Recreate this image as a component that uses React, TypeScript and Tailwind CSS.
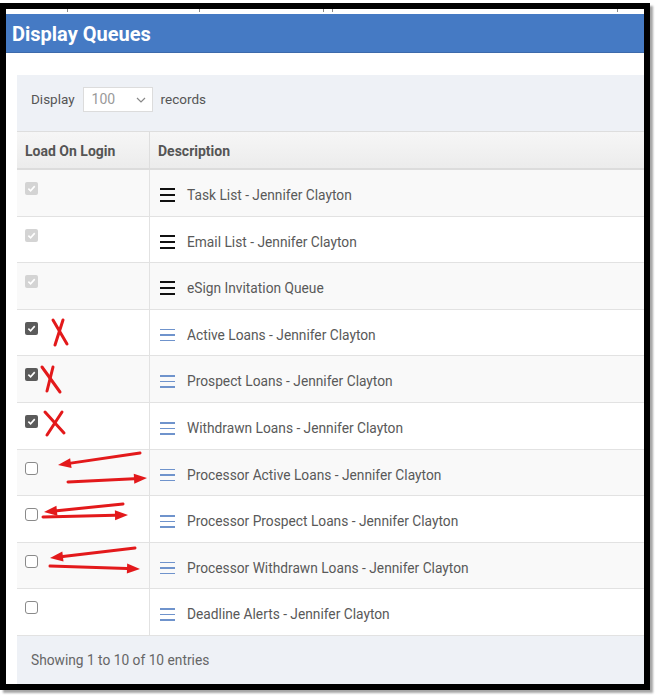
import React from "react";

type Row = { label: string; state: "locked" | "on" | "off"; dark?: boolean };

const rows: Row[] = [
  { label: "Task List - Jennifer Clayton", state: "locked", dark: true },
  { label: "Email List - Jennifer Clayton", state: "locked", dark: true },
  { label: "eSign Invitation Queue", state: "locked", dark: true },
  { label: "Active Loans - Jennifer Clayton", state: "on" },
  { label: "Prospect Loans - Jennifer Clayton", state: "on" },
  { label: "Withdrawn Loans - Jennifer Clayton", state: "on" },
  { label: "Processor Active Loans - Jennifer Clayton", state: "off" },
  { label: "Processor Prospect Loans - Jennifer Clayton", state: "off" },
  { label: "Processor Withdrawn Loans - Jennifer Clayton", state: "off" },
  { label: "Deadline Alerts - Jennifer Clayton", state: "off" },
];

function Check({ state }: { state: Row["state"] }) {
  if (state === "off") {
    return <div className="w-[13px] h-[13px] rounded-[3px] border border-[#8a8a8a] bg-white" />;
  }
  const bg = state === "locked" ? "bg-[#d4d4d4]" : "bg-[#5b5b5b]";
  return (
    <div className={`w-[13px] h-[13px] rounded-[2px] ${bg} flex items-center justify-center`}>
      <svg width="9" height="9" viewBox="0 0 10 10">
        <path d="M1.5 5.2 L4 7.6 L8.6 2.4" fill="none" stroke="#fff" strokeWidth="1.8" />
      </svg>
    </div>
  );
}

function Burger({ dark }: { dark?: boolean }) {
  const c = dark ? "bg-[#111]" : "bg-[#6f93cc]";
  const h = dark ? "h-[2px]" : "h-[1.5px]";
  return (
    <div className="w-[15px] flex flex-col gap-[4px]">
      <div className={`${h} ${c}`} />
      <div className={`${h} ${c}`} />
      <div className={`${h} ${c}`} />
    </div>
  );
}

function Arrow({ x1, y1, x2, y2 }: { x1: number; y1: number; x2: number; y2: number }) {
  const a = Math.atan2(y2 - y1, x2 - x1);
  const L = 13;
  const W = 5;
  const bx = x2 - L * Math.cos(a);
  const by = y2 - L * Math.sin(a);
  const px = -Math.sin(a) * W;
  const py = Math.cos(a) * W;
  return (
    <g>
      <line x1={x1} y1={y1} x2={bx} y2={by} stroke="#e3191b" strokeWidth="3" strokeLinecap="round" />
      <polygon points={`${x2},${y2} ${bx + px},${by + py} ${bx - px},${by - py}`} fill="#e3191b" />
    </g>
  );
}

export default function App() {
  return (
    <div className="relative w-[658px] h-[697px] bg-white overflow-hidden" style={{ fontFamily: "Roboto, 'Liberation Sans', sans-serif" }}>
      <div className="pt-[3px]">
        <div className="w-[650px] h-[687px] border-[6px] border-black shadow-[3px_3px_2px_rgba(0,0,0,0.35)] overflow-hidden bg-white">
          <div className="h-[5px] bg-white flex">
            <div className="ml-[61px] w-px h-[3px] bg-[#888]" />
            <div className="ml-[131px] w-px h-[3px] bg-[#888]" />
            <div className="ml-[123px] w-px h-[3px] bg-[#888]" />
            <div className="ml-[8px] w-px h-[3px] bg-[#888]" />
            <div className="ml-[284px] w-px h-[3px] bg-[#888]" />
          </div>
          <div className="h-[39px] bg-[#457ac4] border-b border-[#3d6aab] flex items-center pl-[6px] pt-[2px]">
            <span className="text-white font-bold text-[20px] leading-none">Display Queues</span>
          </div>
          <div className="pl-[11px] pt-[22px]">
            <div className="w-[700px] h-[620px] bg-[#eef1f6]">
              <div className="h-[56px] flex items-start pt-[12px] pl-[14px] gap-[8px] text-[13.5px] text-[#555]">
                <span className="leading-[25px]">Display</span>
                <div className="w-[70px] h-[25px] bg-white border border-[#dcdcdc] flex items-center justify-between pl-[8px] pr-[6px] text-[#9a9a9a] text-[14px]">
                  <span>100</span>
                  <svg width="10" height="6" viewBox="0 0 10 6">
                    <path d="M1 1 L5 5 L9 1" fill="none" stroke="#888" strokeWidth="1.2" />
                  </svg>
                </div>
                <span className="leading-[25px]">records</span>
              </div>
              <div className="border-t border-[#dedede]">
                <div className="flex h-[38px] bg-gradient-to-b from-[#f6f6f6] to-[#ececec] border-b-2 border-[#dcdcdc] text-[14px] font-bold text-[#555]">
                  <div className="w-[133px] border-r border-[#dedede] flex items-center pl-[8px] pt-[2px]">Load On Login</div>
                  <div className="flex-1 flex items-center pl-[8px] pt-[2px]">Description</div>
                </div>
                {rows.map((r, i) => (
                  <div
                    key={i}
                    className={`flex h-[46.6px] border-b border-[#e2e2e2] ${i % 2 === 0 ? "bg-[#f9f9f9]" : "bg-white"}`}
                  >
                    <div className="w-[133px] border-r border-[#e2e2e2] pl-[8px] pt-[12px]">
                      <Check state={r.state} />
                    </div>
                    <div className="flex-1 flex items-center pl-[10px] pt-[5px] gap-[12px] text-[13.75px] text-[#595959]">
                      <Burger dark={r.dark} />
                      <span>{r.label}</span>
                    </div>
                  </div>
                ))}
              </div>
              <div className="h-[47px] flex items-center pl-[14px] pt-[2px] text-[13.75px] text-[#666]">
                Showing 1 to 10 of 10 entries
              </div>
            </div>
          </div>
        </div>
      </div>
      <svg className="absolute top-0 left-0 pointer-events-none" width="658" height="697">
        <g stroke="#e3191b" strokeWidth="3" strokeLinecap="round" fill="none">
          <line x1="53" y1="320" x2="67" y2="344" />
          <line x1="63" y1="320" x2="55" y2="345" />
          <line x1="42" y1="367" x2="60" y2="392" />
          <line x1="53" y1="367" x2="47" y2="391" />
          <line x1="45" y1="412" x2="64" y2="433" />
          <line x1="62" y1="412" x2="47" y2="435" />
        </g>
        <Arrow x1={140} y1={453} x2={58} y2={465} />
        <Arrow x1={68} y1={482} x2={147} y2={478} />
        <Arrow x1={123} y1={504} x2={44} y2={512} />
        <Arrow x1={43} y1={517} x2={128} y2={515} />
        <Arrow x1={135} y1={548} x2={50} y2={558} />
        <Arrow x1={50} y1={566} x2={140} y2={569} />
      </svg>
    </div>
  );
}
